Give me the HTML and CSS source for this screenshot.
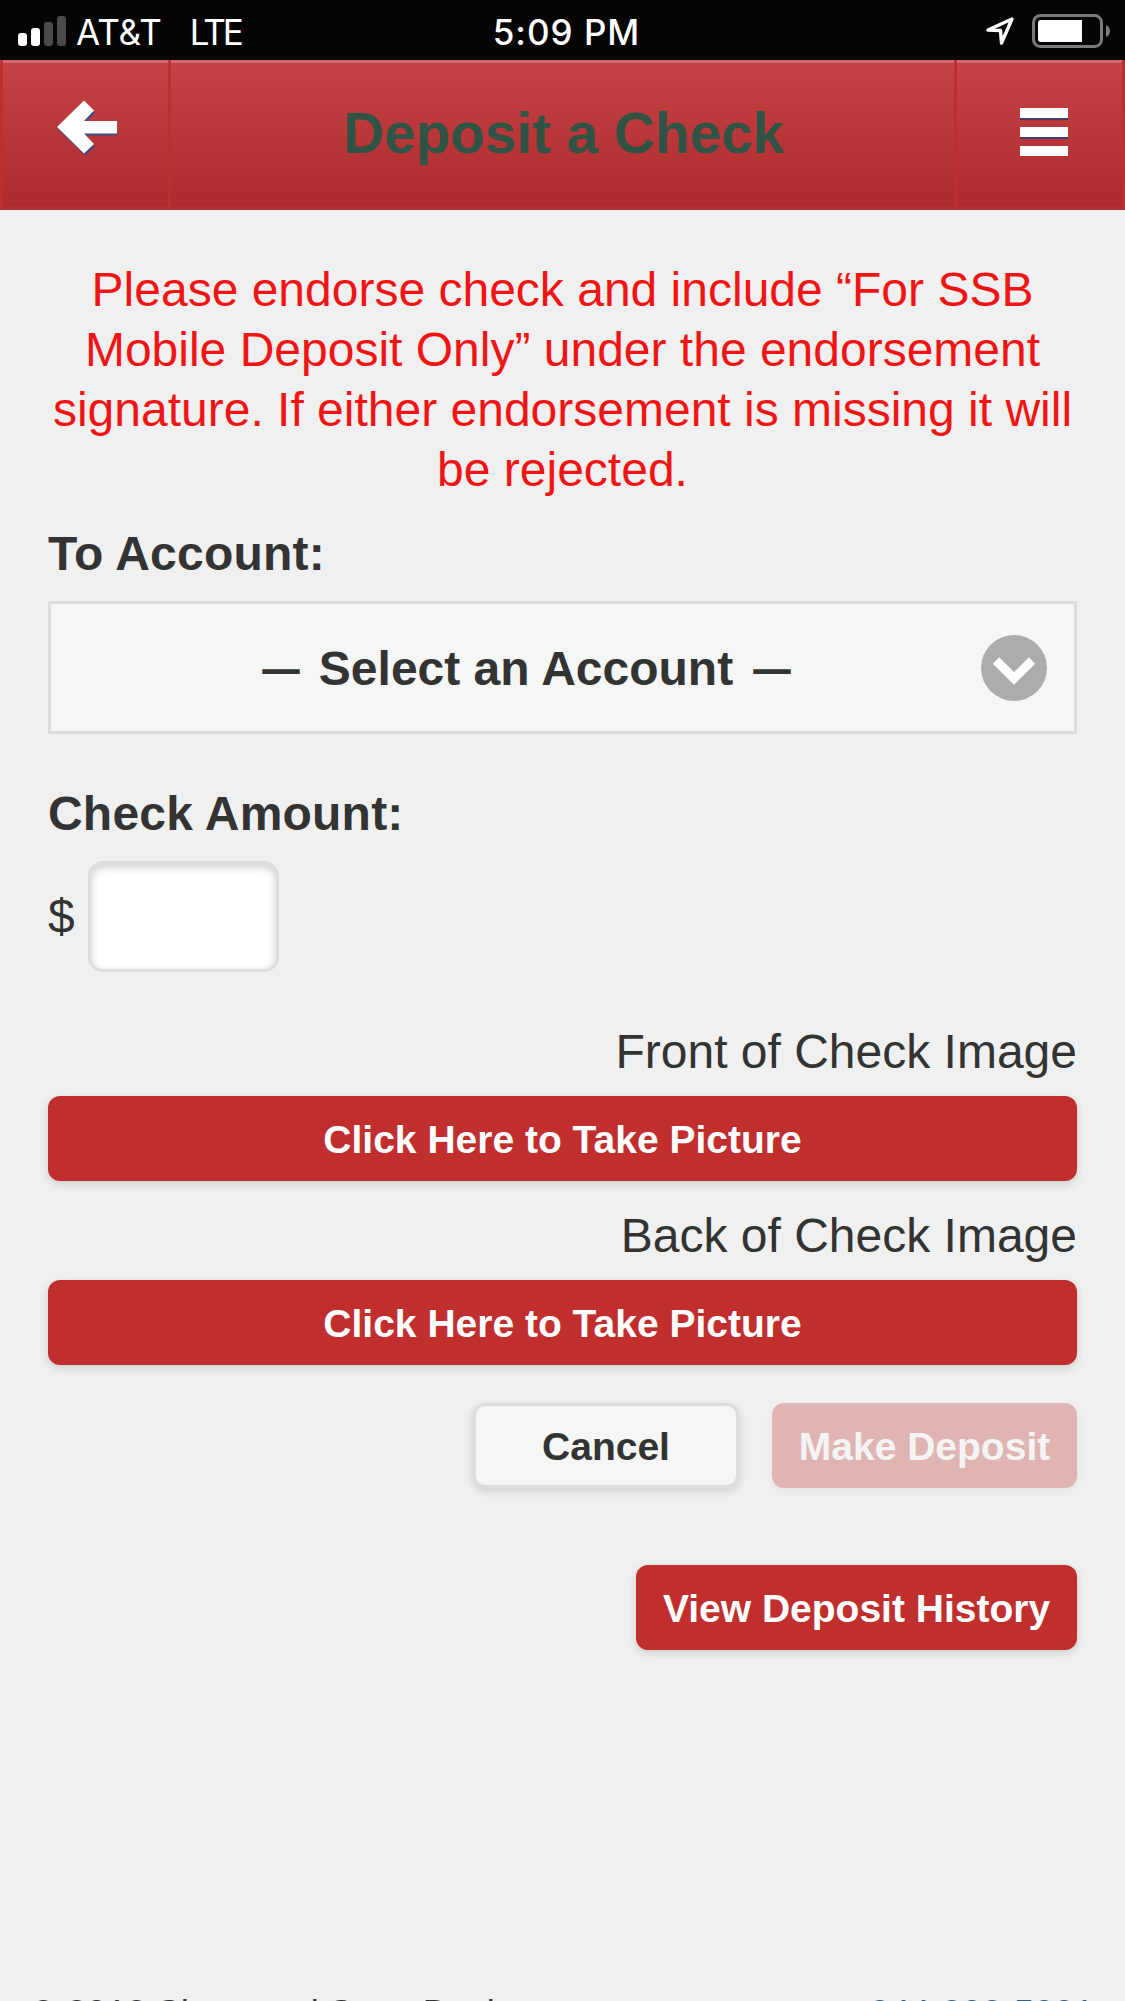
FILE: index.html
```html
<!DOCTYPE html>
<html lang="en">
<head>
    <meta charset="UTF-8">
    <meta name="viewport" content="width=device-width, initial-scale=1.0">
    <title>Deposit a Check</title>
    <link rel="stylesheet" href="styles.css">
</head>
<body>
    <div class="status-bar">
        <div class="carrier">
            <svg class="signal" width="48" height="30" viewBox="0 0 48 30">
                <rect x="0" y="17" width="9" height="13" rx="3" fill="#fff"/>
                <rect x="13" y="12" width="9" height="18" rx="3" fill="#fff"/>
                <rect x="26" y="6" width="9" height="24" rx="3" fill="#4a4a4a"/>
                <rect x="39" y="0" width="9" height="30" rx="3" fill="#4a4a4a"/>
            </svg>
            <span class="carrier-name">AT&amp;T</span>
            <span class="network">LTE</span>
        </div>
        <div class="time">5:09 PM</div>
        <div class="indicators">
            <svg class="location" width="30" height="30" viewBox="0 0 30 30">
                <path d="M27 3 L3 14 L15.5 14.5 L16.5 27 Z" fill="none" stroke="#fff" stroke-width="3.4" stroke-linejoin="round"/>
            </svg>
            <svg class="battery" width="80" height="34" viewBox="0 0 80 34">
                <rect x="1.5" y="1.5" width="68" height="31" rx="7" fill="none" stroke="#7a7a7a" stroke-width="3"/>
                <path d="M9 6 H50 V28 H9 Q6 28 6 25 V9 Q6 6 9 6 Z" fill="#fff"/>
                <path d="M74 11 Q78 13 78 17 Q78 21 74 23 Z" fill="#7a7a7a"/>
            </svg>
        </div>
    </div>

    <header class="header">
        <a class="header-button back" href="#" aria-label="Back">
            <svg width="62" height="58" viewBox="0 0 62 58">
                <path d="M1 28 L28 1.500 L38 11.500 L28 22 H60 V34 H28 L38 45 L28 54 Z" fill="#3f4a80" transform="translate(0 1.500)"/>
                <path d="M0 27 L27 0.500 L37 10.500 L27 21 H60 V33.500 H27 L37 44 L27 53.500 Z" fill="#fff"/>
            </svg>
        </a>
        <h1>Deposit a Check</h1>
        <a class="header-button menu" href="#" aria-label="Menu">
            <span class="bar"></span>
            <span class="bar"></span>
            <span class="bar"></span>
        </a>
    </header>

    <form id="depositForm" class="content">
        <p class="notice">Please endorse check and include “For SSB<br>Mobile Deposit Only” under the endorsement<br>signature. If either endorsement is missing it will<br>be rejected.</p>

        <div class="label account-label">To Account:</div>
        <div class="select">
            <span class="select-text"><span class="dash">—</span> Select an Account <span class="dash">—</span></span>
            <svg class="select-icon" width="66" height="66" viewBox="0 0 66 66">
                <circle cx="33" cy="33" r="33" fill="#acacac"/>
                <path d="M15 25.500 L33 43.500 L51 25.500" fill="none" stroke="#fff" stroke-width="9"/>
            </svg>
        </div>

        <label class="label amount-label" for="amount">Check Amount:</label>
        <div class="amount-row">
            <span class="dollar">$</span>
            <input type="text" id="amount" name="amount">
        </div>

        <div class="image-label front">Front of Check Image</div>
        <button type="button" class="wide">Click Here to Take Picture</button>
        <div class="image-label rear">Back of Check Image</div>
        <button type="button" class="wide">Click Here to Take Picture</button>

        <div class="actions">
            <button type="button" class="cancel">Cancel</button>
            <button type="submit" class="deposit" disabled>Make Deposit</button>
        </div>
        <div class="history-row">
            <button type="button" class="history">View Deposit History</button>
        </div>
    </form>

    <footer class="footer">
        <span class="copyright">© 2018 Sherwood State Bank</span>
        <a href="#">844-303-5001</a>
    </footer>
</body>
</html>
```

FILE: styles.css
```css
* {
    box-sizing: border-box;
}
body {
    font-family: "Liberation Sans", Helvetica, Arial, sans-serif;
    font-size: 48px;
    line-height: 60px;
    color: #333;
    margin: 0;
    background-color: #f0f0f0;
    height: 2001px;
    overflow: hidden;
}
.status-bar {
    height: 60px;
    padding: 0 13px 0 18px;
    background: #050505;
    color: #fff;
    font-family: Inter, sans-serif;
    font-size: 35px;
    display: grid;
    grid-template-columns: 1fr auto 1fr;
    align-items: center;
}
.carrier {
    display: flex;
    align-items: center;
}
.carrier-name {
    margin-left: 10px;
    padding-top: 2px;
}
.network {
    margin-left: 28px;
    padding-top: 2px;
    letter-spacing: -3px;
}
.time {
    padding: 2px 0 0 3px;
    font-weight: 500;
    letter-spacing: 1px;
}
.indicators {
    display: flex;
    justify-content: flex-end;
    align-items: center;
    gap: 17px;
}
.header {
    height: 150px;
    display: grid;
    grid-template-columns: 171px 1fr 171px;
    background: linear-gradient(#c64446, #ae2a2c);
    border-bottom: 3px solid #b43032;
    box-shadow: inset 0 3px #d0686b;
}
.header-button {
    border: solid #bf2e2e;
    border-width: 0 3px;
}
.back {
    padding: 40px 0 0 54px;
}
.menu {
    padding: 48px 0 0 63px;
}
.bar {
    display: block;
    width: 48px;
    height: 10px;
    margin-bottom: 9px;
    background: #fff;
    box-shadow: 0 2px #433d6c;
}
.bar:last-child {
    box-shadow: none;
}
h1 {
    margin: 0;
    padding-left: 3px;
    font-size: 56.7px;
    line-height: 147px;
    text-align: center;
    color: #2f5445;
}
.content {
    padding: 0 48px;
}
.notice {
    margin: 50px -10px 0;
    text-align: center;
    color: #f01414;
}
.label {
    display: block;
    font-weight: bold;
    letter-spacing: 0.2px;
}
.account-label {
    margin-top: 24px;
}
.select {
    height: 133px;
    margin-top: 17px;
    padding: 0 27px 0 20px;
    border: 3px solid #ddd;
    background: #f6f6f6;
    display: flex;
    align-items: center;
    font-weight: bold;
}
.select-text {
    flex: 1;
    padding-top: 3px;
    text-align: center;
}
.dash {
    display: inline-block;
    margin: 0 1px;
    transform: scaleX(0.78);
}
.amount-label {
    margin-top: 50px;
}
.amount-row {
    display: flex;
    align-items: center;
    margin-top: 17px;
}
.dollar {
    width: 40px;
}
input {
    width: 191px;
    height: 111px;
    border: 3px solid #ddd;
    border-radius: 15px;
    background: #fff;
    box-shadow: inset 0 3px 9px rgba(0, 0, 0, 0.2);
}
.image-label {
    text-align: right;
}
.front {
    margin-top: 50px;
}
.rear {
    margin-top: 25px;
}
button {
    display: block;
    height: 85px;
    padding: 2px 0 0;
    border: none;
    border-radius: 12px;
    background: #c02e2e;
    color: #fff;
    font-family: inherit;
    font-size: 39px;
    font-weight: bold;
    box-shadow: 0 3px 9px rgba(0, 0, 0, 0.15);
}
.wide {
    width: 100%;
    margin-top: 14px;
}
.actions {
    display: flex;
    justify-content: flex-end;
    gap: 33px;
    margin-top: 38px;
}
.cancel {
    width: 266px;
    border: 3px solid #ddd;
    background: #f6f6f6;
    color: #333;
}
.deposit {
    width: 305px;
    opacity: 0.3;
}
.history-row {
    display: flex;
    justify-content: flex-end;
    margin-top: 77px;
}
.history {
    width: 441px;
}
.footer {
    display: flex;
    justify-content: space-between;
    padding: 0 31px 0 30px;
    margin-top: 334px;
    font-size: 36px;
}
.footer a {
    color: #2a6496;
    text-decoration: none;
}
```
